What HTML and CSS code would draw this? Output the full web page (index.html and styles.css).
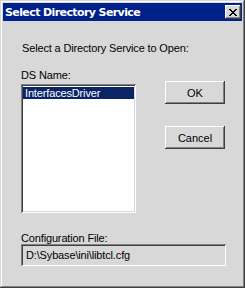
FILE: index.html
```html
<!DOCTYPE html>
<html lang="en">
<head>
    <meta charset="UTF-8">
    <title>Select Directory Service</title>
    <link rel="stylesheet" href="styles.css">
</head>
<body>

<div class="window">
    <!-- Barra de titulo -->
    <div class="titlebar">
        <span class="title">Select Directory Service</span>
        <button type="button" class="close-btn">
            <svg width="8" height="7" viewBox="0 0 8 7">
                <path d="M0 0h2v1h1v1h2v-1h1v-1h2v1h-1v1h-1v1h-1v1h1v1h1v1h1v1h-2v-1h-1v-1h-2v1h-1v1h-2v-1h1v-1h1v-1h1v-1h-1v-1h-1v-1h-1z" fill="#000"/>
            </svg>
        </button>
    </div>

    <div class="content">
        <div class="prompt">Select a Directory Service to Open:</div>
        <div class="label">DS Name:</div>

        <div class="main-row">
            <div class="listbox">
                <div class="item selected">InterfacesDriver</div>
            </div>
            <div class="buttons">
                <button type="button" class="btn">OK</button>
                <button type="button" class="btn">Cancel</button>
            </div>
        </div>

        <div class="label config-label">Configuration File:</div>
        <div class="field">D:\Sybase\ini\libtcl.cfg</div>
    </div>
</div>

</body>
</html>
```

FILE: styles.css
```css
body {
    margin: 0;
    font-family: "Liberation Sans", Arial, sans-serif;
    font-size: 11px;
}

.window {
    width: 245px;
    height: 288px;
    box-sizing: border-box;
    padding: 3px;
    background-color: #d8d8d8;
    box-shadow: inset -1px -1px #404040, inset 1px 1px #d8d8d8,
                inset -2px -2px #808080, inset 2px 2px #fff;
}

.titlebar {
    height: 18px;
    background-color: #00208a;
    display: flex;
    align-items: center;
    justify-content: space-between;
    padding: 0 1px 0 2px;
}

.title {
    color: #fff;
    font-family: "DejaVu Sans", Verdana, sans-serif;
    font-weight: bold;
    font-size: 11px;
    letter-spacing: -0.6px;
}

.close-btn {
    width: 16px;
    height: 14px;
    padding: 0;
    border: none;
    background-color: #d8d8d8;
    display: flex;
    align-items: center;
    justify-content: center;
    box-shadow: inset -1px -1px #404040, inset 1px 1px #fff,
                inset -2px -2px #808080;
}

.content {
    padding: 21px 0 0 18px;
    color: #000;
    letter-spacing: -0.15px;
}

.prompt {
    line-height: 13px;
    padding-left: 1px;
}

.label {
    line-height: 13px;
    margin-top: 14px;
}

.main-row {
    display: flex;
    margin-top: 2px;
}

.listbox {
    width: 115px;
    height: 129px;
    box-sizing: border-box;
    background-color: #fff;
    box-shadow: inset 1px 1px #808080, inset -1px -1px #fff,
                inset 2px 2px #404040, inset -2px -2px #d8d8d8;
    padding: 3px 2px 2px 2px;
}

.item {
    line-height: 12px;
    padding-left: 2px;
}

.item.selected {
    background-color: #0b2468;
    color: #fff;
}

.buttons {
    display: flex;
    flex-direction: column;
    gap: 22px;
    margin-left: 29px;
    margin-top: -3px;
}

.btn {
    width: 60px;
    height: 23px;
    border: none;
    background-color: #d8d8d8;
    font-family: "Liberation Sans", Arial, sans-serif;
    font-size: 11px;
    color: #000;
    box-shadow: inset -1px -1px #404040, inset 1px 1px #fff,
                inset -2px -2px #808080;
}

.config-label {
    margin-top: 19px;
}

.field {
    width: 205px;
    height: 22px;
    box-sizing: border-box;
    margin-top: -1px;
    padding-left: 5px;
    line-height: 22px;
    background-color: #d8d8d8;
    box-shadow: inset 1px 1px #808080, inset -1px -1px #fff,
                inset 2px 2px #404040, inset -2px -2px #d8d8d8;
}
```
